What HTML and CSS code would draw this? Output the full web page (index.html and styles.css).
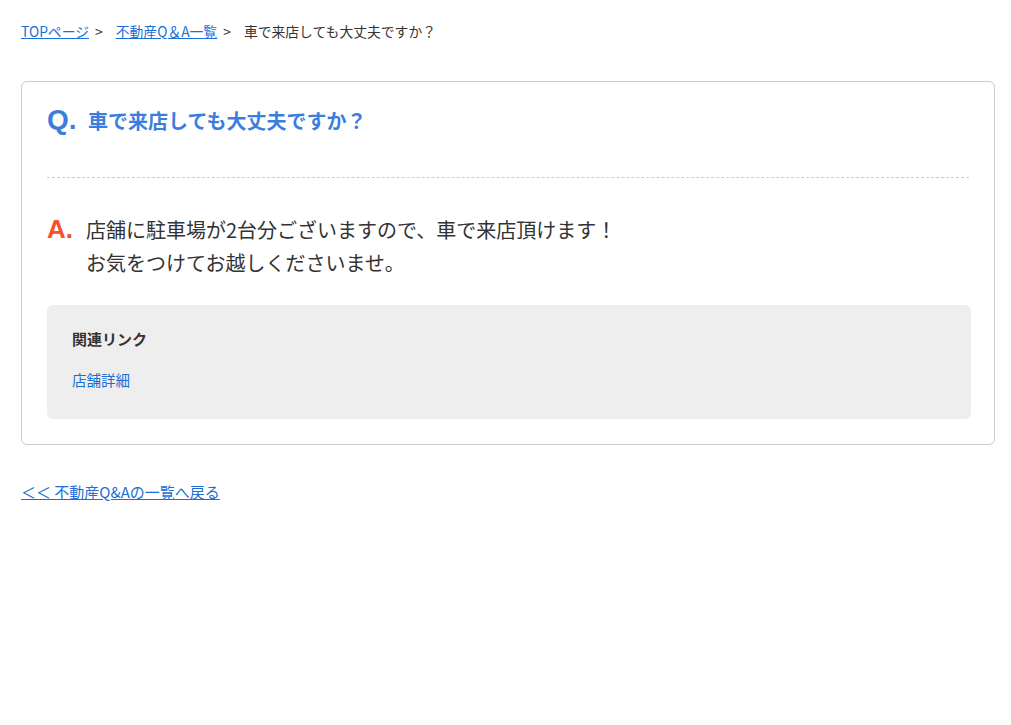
FILE: index.html
```html
<!DOCTYPE html>
<html lang="ja">
<head>
    <meta charset="UTF-8">
    <meta name="viewport" content="width=device-width, initial-scale=1.0">
    <title>車で来店しても大丈夫ですか？ | 不動産Q&amp;A</title>
    <link rel="stylesheet" href="styles.css">
</head>
<body>
    <div class="breadcrumb">
        <a href="#">TOPページ</a><span class="sep">&gt;</span>
        <a href="#">不動産Q＆A一覧</a><span class="sep">&gt;</span>
        <span>車で来店しても大丈夫ですか？</span>
    </div>

    <div class="qa-card">
        <div class="question">
            <span class="mark mark-q">Q.</span>
            <h1>車で来店しても大丈夫ですか？</h1>
        </div>

        <div class="answer">
            <span class="mark mark-a">A.</span>
            <p>店舗に駐車場が2台分ございますので、車で来店頂けます！<br>お気をつけてお越しくださいませ。</p>
        </div>

        <div class="related">
            <h2>関連リンク</h2>
            <a href="#">店舗詳細</a>
        </div>
    </div>

    <a class="back-link" href="#">＜＜ 不動産Q&amp;Aの一覧へ戻る</a>
</body>
</html>
```

FILE: styles.css
```css
body {
    font-family: "Noto Sans CJK JP", "Noto Sans", sans-serif;
    color: #333;
    background-color: #fff;
    margin: 0;
    padding: 20px 16px 20px 21px;
}

a {
    color: #1a6fd6;
}

.breadcrumb {
    font-size: 13.8px;
    line-height: 22px;
}

.breadcrumb .sep {
    margin: 0 10px 0 6px;
}

.qa-card {
    margin-top: 39px;
    border: 1px solid #ccc;
    border-radius: 6px;
    padding: 22px 23px 25px 25px;
}

.question {
    display: flex;
    align-items: baseline;
    padding-bottom: 41px;
    border-bottom: 1px dashed #ccc;
    margin-right: 2px;
}

.mark {
    font-family: "Liberation Sans", Arial, sans-serif;
    font-weight: bold;
    flex-shrink: 0;
}

.mark-q {
    color: #3b7ee0;
    font-size: 28px;
    width: 41px;
}

.mark-a {
    color: #f4512c;
    font-size: 26px;
    width: 39px;
}

.question h1 {
    margin: 0;
    font-size: 20px;
    font-weight: bold;
    color: #3b7ee0;
}

.answer {
    display: flex;
    align-items: baseline;
    margin-top: 35px;
}

.answer p {
    margin: 0;
    font-size: 20px;
    line-height: 33px;
}

.related {
    margin-top: 26px;
    background-color: #eee;
    border-radius: 6px;
    padding: 21px 25px 28px;
}

.related h2 {
    margin: 0 0 15px;
    font-size: 15px;
    font-weight: bold;
    line-height: 26px;
}

.related a {
    font-size: 14.5px;
    text-decoration: none;
    line-height: 22px;
}

.back-link {
    display: inline-block;
    margin-top: 36px;
    font-size: 15px;
    line-height: 22px;
}
```
